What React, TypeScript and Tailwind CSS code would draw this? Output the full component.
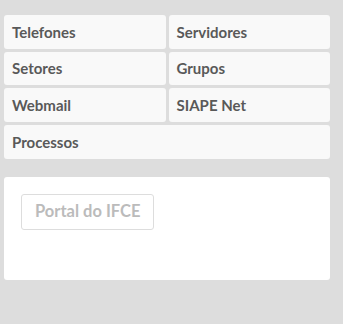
const links = [
  { label: 'Telefones', wide: false },
  { label: 'Servidores', wide: false },
  { label: 'Setores', wide: false },
  { label: 'Grupos', wide: false },
  { label: 'Webmail', wide: false },
  { label: 'SIAPE Net', wide: false },
  { label: 'Processos', wide: true },
];

export default function App() {
  return (
    <div className="min-h-[324px] w-full bg-[#dddddd] px-[4px] pt-[15px] font-['Lato','Liberation_Sans',sans-serif]">
      <div className="w-[326px]">
        {/* atalhos */}
        <div className="grid grid-cols-2 gap-x-[3px] gap-y-[3px]">
          {links.map((l) => (
            <a
              key={l.label}
              href="#"
              className={`flex h-[33.7px] items-center rounded-[3px] bg-[#f9f9f9] px-[8px] text-[15px] font-bold text-[#595959] ${
                l.wide ? 'col-span-2' : ''
              }`}
            >
              {l.label}
            </a>
          ))}
        </div>

        {/* painel */}
        <div className="mt-[18px] h-[103px] rounded-[3px] bg-white p-[17px]">
          <button className="h-[36px] rounded-[3px] border border-[#dddddd] bg-white px-[13px] text-[16.5px] font-bold text-[#bbbbbb]">
            Portal do IFCE
          </button>
        </div>
      </div>
    </div>
  );
}
